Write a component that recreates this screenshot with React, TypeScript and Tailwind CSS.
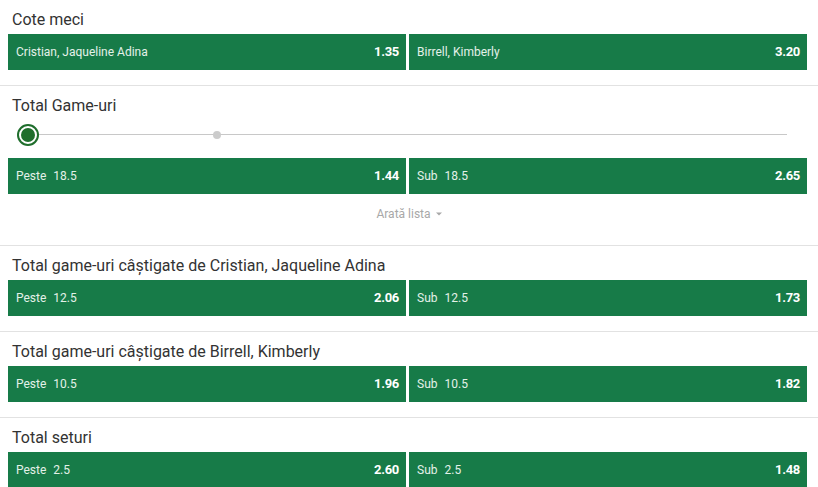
import React from 'react';

type Odd = { label: string; line?: string; price: string };
type Market = { title: string; odds: [Odd, Odd]; slider?: boolean };

const markets: Market[] = [
  {
    title: 'Cote meci',
    odds: [
      { label: 'Cristian, Jaqueline Adina', price: '1.35' },
      { label: 'Birrell, Kimberly', price: '3.20' },
    ],
  },
  {
    title: 'Total Game-uri',
    slider: true,
    odds: [
      { label: 'Peste', line: '18.5', price: '1.44' },
      { label: 'Sub', line: '18.5', price: '2.65' },
    ],
  },
  {
    title: 'Total game-uri câștigate de Cristian, Jaqueline Adina',
    odds: [
      { label: 'Peste', line: '12.5', price: '2.06' },
      { label: 'Sub', line: '12.5', price: '1.73' },
    ],
  },
  {
    title: 'Total game-uri câștigate de Birrell, Kimberly',
    odds: [
      { label: 'Peste', line: '10.5', price: '1.96' },
      { label: 'Sub', line: '10.5', price: '1.82' },
    ],
  },
  {
    title: 'Total seturi',
    odds: [
      { label: 'Peste', line: '2.5', price: '2.60' },
      { label: 'Sub', line: '2.5', price: '1.48' },
    ],
  },
];

function OddButton({ odd }: { odd: Odd }) {
  return (
    <button className="flex-1 h-9 bg-[#177b48] flex items-center justify-between pl-2 pr-[7px] text-left">
      <span className="text-[12px] text-[#e4f1e8]">
        {odd.label}
        {odd.line && <span className="ml-[7px]">{odd.line}</span>}
      </span>
      <span className="text-[13px] font-bold text-white tracking-[-0.3px]">{odd.price}</span>
    </button>
  );
}

function Slider() {
  return (
    <div className="h-[38px] relative mx-[17px] mr-[31px]">
      <div className="absolute left-[11px] right-0 top-[14px] h-px bg-[#c8c8c8]"></div>
      <div className="absolute left-[196px] top-[11px] w-2 h-2 rounded-full bg-[#cccccc]"></div>
      <div className="absolute left-0 top-[4px] w-[22px] h-[22px] rounded-full border-2 border-[#1f6e2c] bg-white flex items-center justify-center">
        <div className="w-[14px] h-[14px] rounded-full bg-[#1f6e2c]"></div>
      </div>
    </div>
  );
}

export default function App() {
  return (
    <div className="w-[818px] h-[487px] overflow-hidden bg-white" style={{ fontFamily: 'Roboto, "Liberation Sans", sans-serif' }}>
      {markets.map((m, i) => (
        <div key={i} className="pt-[10px] pb-[15px] border-b border-[#e2e2e2]">
          <h3 className="h-6 pl-3 text-[16px] leading-[20px] text-[#333333]">{m.title}</h3>
          {m.slider && <Slider />}
          <div className="flex gap-[3px] pl-2 pr-[11px]">
            <OddButton odd={m.odds[0]} />
            <OddButton odd={m.odds[1]} />
          </div>
          {m.slider && (
            <div className="h-9 pt-[3px] flex items-center justify-center text-[12px] text-[#a8a8a8]">
              Arată lista
              <svg className="ml-[5px]" width="6" height="4" viewBox="0 0 6 4">
                <path d="M0 0.5 L3 3.5 L6 0.5 Z" fill="#a8a8a8" />
              </svg>
            </div>
          )}
        </div>
      ))}
    </div>
  );
}
